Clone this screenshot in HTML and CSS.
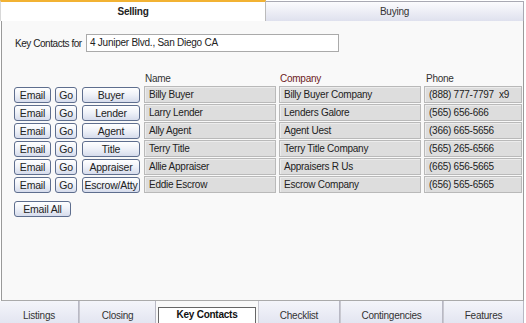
FILE: index.html
```html
<!DOCTYPE html>
<html>
<head>
<meta charset="utf-8">
<link rel="stylesheet" href="styles.css">
</head>
<body>
<div class="app">
  <div class="top-tabs">
    <div class="ttab selected">Selling</div>
    <div class="ttab">Buying</div>
  </div>
  <div class="panel">
    <div class="for-row">
      <span class="for-label">Key Contacts for</span>
      <div class="input">4 Juniper Blvd., San Diego CA</div>
    </div>
    <div class="grid">
      <div class="hdr h-name">Name</div>
      <div class="hdr h-company">Company</div>
      <div class="hdr h-phone">Phone</div>

      <button class="btn b-email">Email</button><button class="btn b-go">Go</button><button class="btn b-role">Buyer</button>
      <div class="cell c-name">Billy Buyer</div><div class="cell c-comp">Billy Buyer Company</div><div class="cell c-phone">(888) 777-7797&nbsp; x9</div>

      <button class="btn b-email">Email</button><button class="btn b-go">Go</button><button class="btn b-role">Lender</button>
      <div class="cell c-name">Larry Lender</div><div class="cell c-comp">Lenders Galore</div><div class="cell c-phone">(565) 656-666</div>

      <button class="btn b-email">Email</button><button class="btn b-go">Go</button><button class="btn b-role">Agent</button>
      <div class="cell c-name">Ally Agent</div><div class="cell c-comp">Agent Uest</div><div class="cell c-phone">(366) 665-5656</div>

      <button class="btn b-email">Email</button><button class="btn b-go">Go</button><button class="btn b-role">Title</button>
      <div class="cell c-name">Terry Title</div><div class="cell c-comp">Terry Title Company</div><div class="cell c-phone">(565) 265-6566</div>

      <button class="btn b-email">Email</button><button class="btn b-go">Go</button><button class="btn b-role">Appraiser</button>
      <div class="cell c-name">Allie Appraiser</div><div class="cell c-comp">Appraisers R Us</div><div class="cell c-phone">(665) 656-5665</div>

      <button class="btn b-email">Email</button><button class="btn b-go">Go</button><button class="btn b-role">Escrow/Atty</button>
      <div class="cell c-name">Eddie Escrow</div><div class="cell c-comp">Escrow Company</div><div class="cell c-phone">(656) 565-6565</div>
    </div>
    <button class="btn email-all">Email All</button>
  </div>
  <div class="bottom-tabs">
    <div class="btab w-listings">Listings</div>
    <div class="btab w-closing">Closing</div>
    <div class="btab selected w-key">Key Contacts</div>
    <div class="btab w-check">Checklist</div>
    <div class="btab w-cont">Contingencies</div>
    <div class="btab w-feat">Features</div>
  </div>
</div>
</body>
</html>
```

FILE: styles.css
```css
html, body {
  margin: 0;
  padding: 0;
  background: #ffffff;
}
body {
  font-family: "Liberation Sans", Arial, sans-serif;
  font-size: 10px;
  letter-spacing: -0.25px;
  color: #222;
}
.app {
  width: 524px;
  height: 323px;
  display: flex;
  flex-direction: column;
  overflow: hidden;
}
.top-tabs {
  display: flex;
  height: 21px;
  flex: none;
}
.ttab {
  box-sizing: border-box;
  height: 21px;
  display: flex;
  align-items: center;
  justify-content: center;
  color: #333;
}
.ttab.selected {
  width: 266px;
  background: #fff;
  border-top: 2px solid #f2b233;
  border-left: 1px solid #d8d8d8;
  border-right: 1px solid #bbb;
  font-weight: bold;
  color: #222;
  padding-bottom: 1px;
}
.ttab:not(.selected) {
  flex: 1;
  background: linear-gradient(#fbfbfd, #dfe1ee);
  border: 1px solid #a9a9b3;
  border-left: none;
  border-bottom: 1px solid #b6b6c0;
  margin-top: 1px;
  height: 21px;
}
.panel {
  flex: 1;
  background: #f9f9f9;
  border-left: 1px solid #9a9a9a;
  border-right: 1px solid #9a9a9a;
  border-bottom: 1px solid #aaa;
  margin-left: 1px;
  padding: 13px 0 0 12px;
  display: flex;
  flex-direction: column;
  align-items: flex-start;
}
.for-row {
  display: flex;
  align-items: center;
  height: 18px;
}
.for-label {
  box-sizing: border-box;
  width: 72px;
  padding-left: 1px;
  letter-spacing: -0.45px;
  white-space: nowrap;
  color: #222;
}
.input {
  box-sizing: border-box;
  width: 253px;
  height: 18px;
  background: #fff;
  border: 1px solid #aaa;
  padding: 0 3px;
  line-height: 16px;
}
.grid {
  margin-top: 20px;
  display: grid;
  grid-template-columns: 41px 27px 62px 135px 145px 98px;
  grid-template-rows: 13px;
  grid-auto-rows: 17px;
  row-gap: 1px;
}
.hdr {
  line-height: 13px;
  height: 13px;
  color: #333;
  padding-left: 1px;
}
.h-name { grid-column: 4; }
.h-company { grid-column: 5; color: #6e2121; }
.h-phone { grid-column: 6; padding-left: 2px; }
.btn {
  box-sizing: border-box;
  font-family: "Liberation Sans", Arial, sans-serif;
  font-size: 10.5px;
  letter-spacing: -0.2px;
  color: #222;
  height: 16px;
  margin-top: 1px;
  padding: 0;
  border: 1px solid #5e6e8e;
  border-radius: 3px;
  background: linear-gradient(#ffffff, #eef1f8 50%, #d6dcec);
  line-height: 14px;
  text-align: center;
  white-space: nowrap;
}
.b-email { width: 37px; }
.b-go { width: 22px; }
.b-role { width: 58px; }
.cell {
  box-sizing: border-box;
  background: #dddddd;
  border: 1px solid #b9b9b9;
  box-shadow: inset 1px 1px 0 #ececec;
  padding-left: 4px;
  line-height: 15px;
  white-space: nowrap;
  overflow: hidden;
  color: #222;
}
.c-name { width: 132px; }
.c-comp { width: 142px; }
.c-phone { width: 98px; }
.email-all {
  margin-top: 8px;
  width: 57px;
  height: 16px;
}
.bottom-tabs {
  display: flex;
  height: 22px;
  flex: none;
  align-items: flex-start;
  background: #f9f9f9;
}
.btab {
  box-sizing: border-box;
  height: 22px;
  display: flex;
  align-items: center;
  justify-content: center;
  padding-top: 6px;
  background: linear-gradient(#f4f5fa, #e3e5f1);
  border-left: 1px solid #c8c8d0;
  border-right: 1px solid #b8b8c4;
  color: #333;
}
.btab.selected {
  background: #fff;
  border: 1px solid #666;
  margin: 6px 2px 0;
  font-weight: bold;
  padding-top: 0;
  padding-bottom: 2px;
  height: 17px;
  color: #111;
}
.w-listings { width: 79px; border-left: none; }
.w-closing { width: 77px; }
.w-key { width: 98px; }
.w-check { width: 82px; }
.w-cont { width: 103px; }
.w-feat { flex: 1; }
```
